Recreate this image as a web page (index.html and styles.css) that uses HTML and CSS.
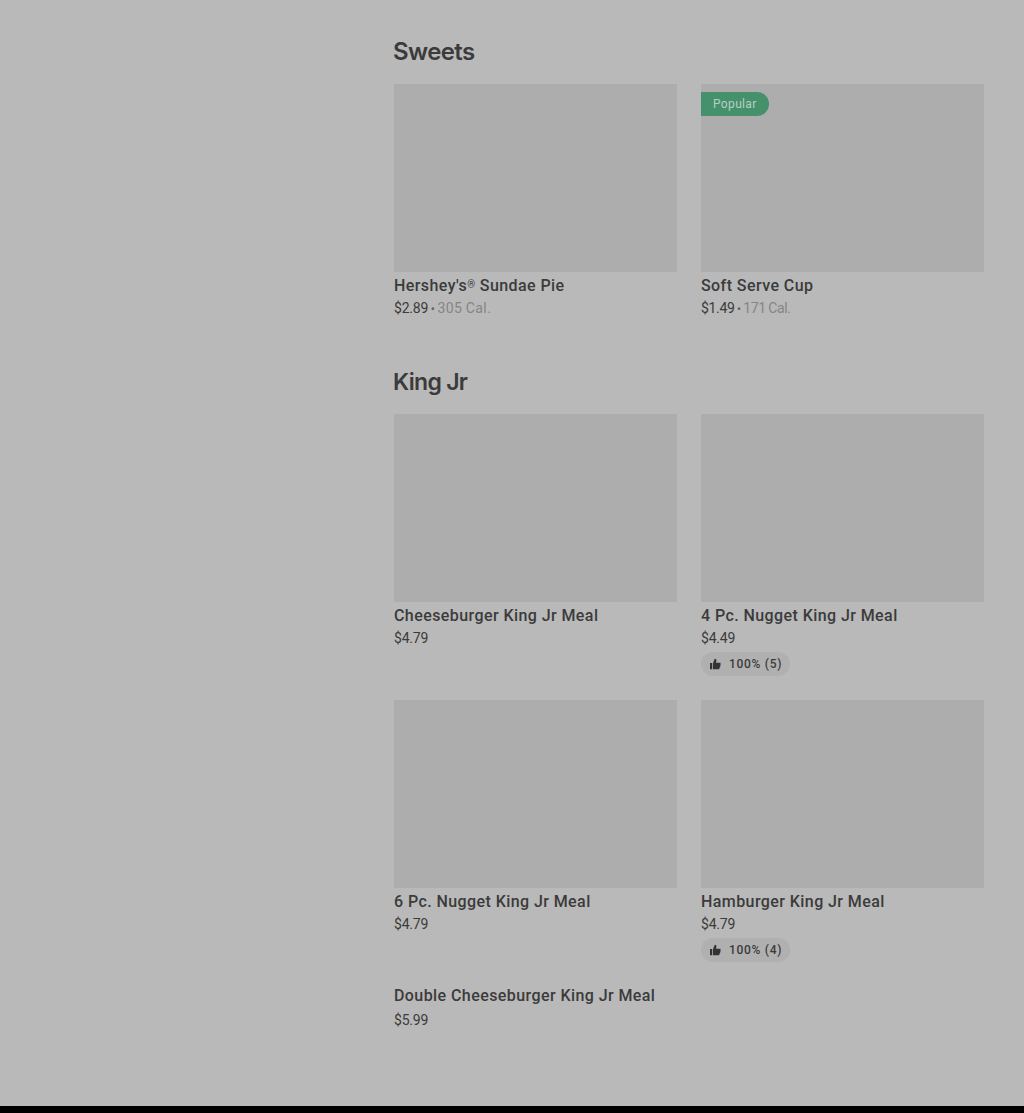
FILE: index.html
```html
<!DOCTYPE html>
<html lang="en">
<head>
    <meta charset="UTF-8">
    <meta name="viewport" content="width=device-width, initial-scale=1.0">
    <title>Menu</title>
    <link rel="stylesheet" href="styles.css">
</head>
<body>
    <main class="menu">
        <section class="menu-section">
            <h2>Sweets</h2>
            <div class="menu-grid">
                <article class="item">
                    <div class="item-photo"></div>
                    <h3>Hershey's<span class="reg">®</span> Sundae Pie</h3>
                    <p class="price">$2.89 <span class="dot">•</span> <span class="calories wide">305 Cal.</span></p>
                </article>
                <article class="item">
                    <div class="item-photo"><span class="badge">Popular</span></div>
                    <h3>Soft Serve Cup</h3>
                    <p class="price tight">$1.49 <span class="dot">•</span> <span class="calories">171 Cal.</span></p>
                </article>
            </div>
        </section>
        <section class="menu-section">
            <h2 class="king">King Jr</h2>
            <div class="menu-grid">
                <article class="item">
                    <div class="item-photo"></div>
                    <h3>Cheeseburger King Jr Meal</h3>
                    <p class="price">$4.79</p>
                </article>
                <article class="item">
                    <div class="item-photo"></div>
                    <h3>4 Pc. Nugget King Jr Meal</h3>
                    <p class="price">$4.49</p>
                    <div class="rating">
                        <svg viewBox="0 0 12 12" width="12" height="12"><path d="M1 5h2.2v6.2H1zM4 5.2 5.8 0.8c1.2 0 1.8.7 1.6 1.9L7 4.7h4.5v3l-1.5 3.5H4z"/></svg>
                        <span>100% (5)</span>
                    </div>
                </article>
                <article class="item">
                    <div class="item-photo"></div>
                    <h3>6 Pc. Nugget King Jr Meal</h3>
                    <p class="price">$4.79</p>
                </article>
                <article class="item">
                    <div class="item-photo"></div>
                    <h3>Hamburger King Jr Meal</h3>
                    <p class="price">$4.79</p>
                    <div class="rating">
                        <svg viewBox="0 0 12 12" width="12" height="12"><path d="M1 5h2.2v6.2H1zM4 5.2 5.8 0.8c1.2 0 1.8.7 1.6 1.9L7 4.7h4.5v3l-1.5 3.5H4z"/></svg>
                        <span>100% (4)</span>
                    </div>
                </article>
                <article class="item text-only">
                    <h3>Double Cheeseburger King Jr Meal</h3>
                    <p class="price">$5.99</p>
                </article>
            </div>
        </section>
    </main>
    <footer class="footer"></footer>
</body>
</html>
```

FILE: styles.css
```css
* {
    margin: 0;
    padding: 0;
    box-sizing: border-box;
}
body {
    font-family: Roboto, "Liberation Sans", sans-serif;
    background: #b9b9b9;
    color: #3b3b3b;
    overflow: hidden;
}
.menu {
    height: 1106px;
    padding: 34px 40px 0 394px;
}
.menu-section {
    margin-bottom: 45px;
}
h2 {
    font-family: Inter, sans-serif;
    font-size: 24px;
    font-weight: 600;
    line-height: 36px;
    letter-spacing: -0.6px;
    margin-bottom: 14px;
    margin-left: -1px;
}
.king {
    font-size: 23px;
    letter-spacing: -0.7px;
}
.menu-grid {
    display: grid;
    grid-template-columns: 1fr 1fr;
    gap: 24px;
}
.item-photo {
    height: 188px;
    padding-top: 8px;
    background: #adadad;
}
.badge {
    display: block;
    width: 68px;
    height: 24px;
    padding-left: 12px;
    border-radius: 0 12px 12px 0;
    background: #45916c;
    color: #b9cec2;
    font-size: 12px;
    line-height: 24px;
    letter-spacing: 0.35px;
}
h3 {
    margin-top: 3px;
    font-size: 16px;
    font-weight: 500;
    line-height: 22px;
    letter-spacing: 0.42px;
    white-space: nowrap;
}
.reg {
    font-size: 10px;
    line-height: 1;
    vertical-align: 3px;
}
.price {
    margin-top: 1px;
    font-size: 14px;
    line-height: 20px;
    letter-spacing: -0.2px;
    word-spacing: -0.6px;
}
.dot {
    font-size: 12px;
    color: #606060;
}
.calories {
    color: #858585;
}
.wide {
    letter-spacing: 0.45px;
}
.tight {
    letter-spacing: -0.35px;
}
.rating {
    display: flex;
    align-items: center;
    gap: 8px;
    width: 89px;
    height: 24px;
    margin-top: 4px;
    padding-left: 8px;
    border-radius: 12px;
    background: #b0b0b0;
    font-size: 12px;
    font-weight: 500;
    letter-spacing: 0.7px;
    white-space: nowrap;
}
.rating svg {
    fill: #333333;
}
.text-only h3 {
    margin-top: -1px;
}
.text-only .price {
    margin-top: 3px;
}
.footer {
    height: 7px;
    background: #000000;
}
```
